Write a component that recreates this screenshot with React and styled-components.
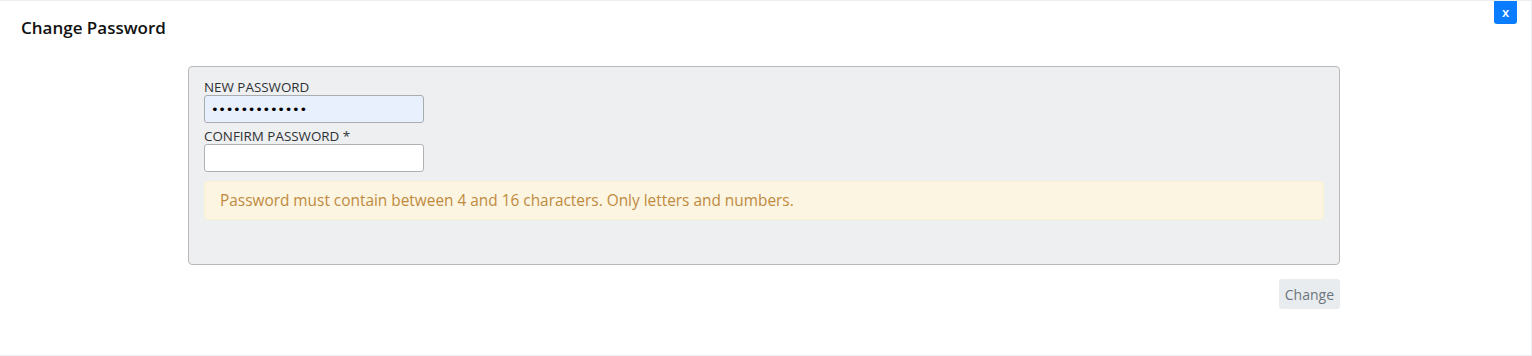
import React from "react";
import styled, { createGlobalStyle } from "styled-components";

const GlobalStyle = createGlobalStyle`
  html, body {
    margin: 0;
    padding: 0;
    background: #ffffff;
  }
  body {
    font-family: "Open Sans", "Noto Sans", sans-serif;
    color: #212529;
  }
`;

const App = () => {
  return (
    <>
      <GlobalStyle />
      <ModalContainer>
        <Header>
          <Title>Change Password</Title>
          <CloseButton type="button">x</CloseButton>
        </Header>
        <Body>
          <Panel>
            <Label>NEW PASSWORD</Label>
            <Input type="password" defaultValue="abcdefghijklm" $autofill />
            <Label $gap>CONFIRM PASSWORD *</Label>
            <Input type="password" />
            <Alert>
              Password must contain between 4 and 16 characters. Only letters
              and numbers.
            </Alert>
          </Panel>
          <Footer>
            <ChangeButton type="button">Change</ChangeButton>
          </Footer>
        </Body>
      </ModalContainer>
    </>
  );
};

const ModalContainer = styled.div`
  box-sizing: border-box;
  width: 1532px;
  height: 356px;
  border-top: 1px solid #ebedef;
  border-bottom: 1px solid #ebedef;
  border-right: 1px solid #ebedef;
  background: #ffffff;
`;

const Header = styled.div`
  display: flex;
  justify-content: space-between;
  align-items: flex-start;
  height: 65px;
  padding-left: 21px;
  padding-right: 14px;
`;

const Title = styled.h5`
  margin: 16px 0 0;
  font-size: 17px;
  font-weight: 600;
  line-height: 22px;
  color: #111111;
`;

const CloseButton = styled.button`
  width: 23px;
  height: 23px;
  padding: 0;
  border: none;
  border-radius: 0 0 3px 3px;
  background: #0a7cff;
  color: #ffffff;
  font-family: "Open Sans", sans-serif;
  font-size: 13px;
  font-weight: 600;
  line-height: 21px;
  cursor: pointer;
`;

const Body = styled.div`
  padding-left: 188px;
  width: 1152px;
`;

const Panel = styled.div`
  display: flex;
  flex-direction: column;
  align-items: flex-start;
  padding: 12px 15px 44px;
  background: #eeeff1;
  border: 1px solid #b9b9bb;
  border-radius: 4px;
`;

const Label = styled.label`
  margin-top: ${(props) => (props.$gap ? "5px" : "0")};
  font-size: 13.4px;
  line-height: 16px;
  color: #2f3235;
`;

const Input = styled.input`
  box-sizing: border-box;
  width: 220px;
  height: 28px;
  margin: 0;
  padding: 0 6px;
  border: 1px solid ${(props) => (props.$autofill ? "#a9adb2" : "#aeb2b6")};
  border-radius: 3px;
  background: ${(props) => (props.$autofill ? "#e8f0fe" : "#ffffff")};
  font-family: "DejaVu Sans", sans-serif;
  font-size: 13px;
  letter-spacing: -0.3px;
  color: #000000;
  outline: none;
`;

const Alert = styled.div`
  box-sizing: border-box;
  align-self: stretch;
  margin-top: 9px;
  padding: 10px 15px;
  background: #fcf5e1;
  border: 1px solid #fbf0d4;
  border-radius: 4px;
  color: #bf8a3f;
  font-size: 15.4px;
  line-height: 17px;
`;

const Footer = styled.div`
  display: flex;
  justify-content: flex-end;
  margin-top: 14px;
`;

const ChangeButton = styled.button`
  height: 30px;
  padding: 0 6px;
  border: none;
  border-radius: 3px;
  background: #e9ecef;
  color: #6c757d;
  font-family: "Open Sans", sans-serif;
  font-size: 14px;
  cursor: pointer;
`;

export default App;
